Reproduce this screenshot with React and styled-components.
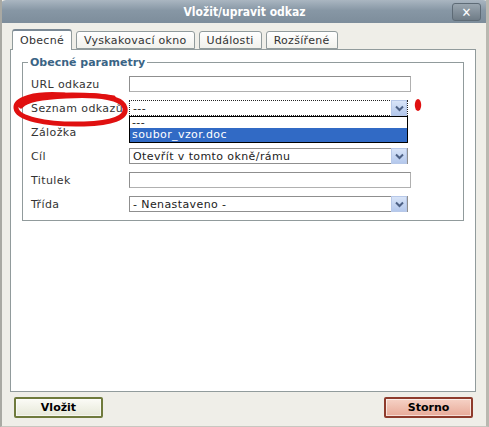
import React from "react";
import styled, { createGlobalStyle } from "styled-components";

const Global = createGlobalStyle`
  html, body { margin: 0; padding: 0; background: #fff; }
  body { font-family: "DejaVu Sans", Verdana, sans-serif; font-size: 11px; }
`;

const Win = styled.div`
  position: relative;
  width: 489px;
  height: 427px;
  box-sizing: border-box;
  background: #efeee8;
  border-left: 2px solid #a9a9a3;
  border-right: 3px solid #b9b8b0;
  border-bottom: 1px solid #c8c7c0;
  overflow: hidden;
`;

const TitleBar = styled.div`
  height: 23px;
  margin: 0 -3px 0 -2px;
  border-radius: 6px 6px 0 0;
  background: linear-gradient(#aab6c1, #8797a5 45%, #7d8d9b);
  display: flex;
  align-items: center;
  justify-content: center;
  position: relative;
  color: #fff;
  font-weight: bold;
  font-size: 12px;
  font-family: "DejaVu Sans Condensed", "DejaVu Sans", sans-serif;
`;

const Close = styled.div`
  position: absolute;
  right: 8px;
  top: 3px;
  width: 27px;
  height: 16px;
  border-radius: 3px;
  border: 1px solid #5e6b76;
  background: linear-gradient(#9aa6b0, #6f7c87);
  display: flex;
  align-items: center;
  justify-content: center;
  color: #fff;
  font-size: 13px;
  font-weight: bold;
`;

const Body = styled.div`
  padding: 6px 10px 0 8px;
`;

const Tabs = styled.div`
  display: flex;
  gap: 4px;
  padding-left: 2px;
  height: 20px;
  align-items: flex-end;
`;

const Tab = styled.div`
  height: ${p => (p.$active ? "21px" : "18px")};
  box-sizing: border-box;
  padding: 0 7px;
  display: flex;
  align-items: center;
  border: 1px solid #919b9c;
  border-bottom: ${p => (p.$active ? "none" : "1px solid #919b9c")};
  border-top: ${p => (p.$active ? "2px solid #7a8894" : "1px solid #919b9c")};
  border-radius: 3px 3px 0 0;
  background: ${p => (p.$active ? "#fff" : "linear-gradient(#fff, #f1f1ec)")};
  margin-bottom: ${p => (p.$active ? "-1px" : "0")};
  color: #333;
  position: relative;
  z-index: ${p => (p.$active ? 2 : 1)};
  letter-spacing: 0.3px;
`;

const Panel = styled.div`
  background: #fff;
  border: 1px solid #919b9c;
  height: 343px;
  box-sizing: border-box;
  padding: 6px 11px 0 11px;
`;

const Fieldset = styled.fieldset`
  margin: 0;
  border: 1px solid #919b9c;
  padding: 7px 8px 8px 8px;
  display: grid;
  grid-template-columns: 98px 1fr;
  row-gap: 8px;
  align-items: center;
`;

const Legend = styled.legend`
  color: #3a6485;
  font-weight: bold;
  padding: 0 2px;
  margin-left: -3px;
`;

const Label = styled.div`
  color: #333;
  letter-spacing: 0.4px;
  white-space: nowrap;
`;

const Input = styled.div`
  height: 16px;
  width: 282px;
  box-sizing: border-box;
  border: 1px solid;
  border-color: #8f8f8f #b0b0b0 #b0b0b0 #8f8f8f;
  background: #fff;
`;

const Select = styled.div`
  height: 16px;
  width: 279px;
  box-sizing: border-box;
  border: 1px ${p => (p.$focus ? "dotted #222" : "solid #8f8f8f")};
  background: #fff;
  display: flex;
  align-items: center;
  padding-left: 3px;
  position: relative;
  color: #222;
  letter-spacing: 0.4px;
  white-space: nowrap;
`;

const Arrow = styled.div`
  position: absolute;
  right: 0;
  top: -1px;
  width: 16px;
  height: 16px;
  box-sizing: border-box;
  border: 1px solid #b7c8e8;
  background: linear-gradient(#d8e4f8, #b4c8ec);
  display: flex;
  align-items: center;
  justify-content: center;
`;

const Cell = styled.div`
  position: relative;
  height: 16px;
`;

const DropList = styled.div`
  position: absolute;
  left: 0;
  top: 16px;
  width: 279px;
  box-sizing: border-box;
  border: 1px solid #000;
  background: #fff;
  z-index: 5;
`;

const Option = styled.div`
  height: ${p => (p.$sel ? "14px" : "11px")};
  line-height: ${p => (p.$sel ? "14px" : "11px")};
  padding-left: 2px;
  letter-spacing: 0.4px;
  color: ${p => (p.$sel ? "#fff" : "#222")};
  background: ${p => (p.$sel ? "#316ac5" : "#fff")};
`;

const Footer = styled.div`
  display: flex;
  justify-content: space-between;
  padding: 5px 3px 0 4px;
`;

const Btn = styled.div`
  width: 89px;
  height: 21px;
  box-sizing: border-box;
  border: 2px solid ${p => p.$edge};
  border-radius: 2px;
  background: ${p => p.$fill};
  display: flex;
  align-items: center;
  justify-content: center;
  font-weight: bold;
  font-size: 11px;
  color: #000;
  box-shadow: inset 0 0 0 1px rgba(255,255,255,0.6);
`;

const Scribble = styled.svg`
  position: absolute;
  left: 0;
  top: 0;
  pointer-events: none;
  z-index: 10;
`;

const Chevron = () => (
  <svg width="9" height="7" viewBox="0 0 9 7">
    <path d="M1 1.5 L4.5 5 L8 1.5" stroke="#4d6185" strokeWidth="2" fill="none" />
  </svg>
);

export default function App() {
  return (
    <>
      <Global />
      <Win>
        <TitleBar>
          Vložit/upravit odkaz
          <Close>✕</Close>
        </TitleBar>
        <Body>
          <Tabs>
            <Tab $active>Obecné</Tab>
            <Tab>Vyskakovací okno</Tab>
            <Tab>Události</Tab>
            <Tab>Rozšířené</Tab>
          </Tabs>
          <Panel>
            <Fieldset>
              <Legend>Obecné parametry</Legend>
              <Label>URL odkazu</Label>
              <Input />
              <Label>Seznam odkazů</Label>
              <Cell>
                <Select $focus>
                  ---
                  <Arrow><Chevron /></Arrow>
                </Select>
                <DropList>
                  <Option>---</Option>
                  <Option $sel>soubor_vzor.doc</Option>
                </DropList>
              </Cell>
              <Label>Záložka</Label>
              <Cell />
              <Label>Cíl</Label>
              <Select>
                Otevřít v tomto okně/rámu
                <Arrow><Chevron /></Arrow>
              </Select>
              <Label>Titulek</Label>
              <Input />
              <Label>Třída</Label>
              <Select>
                - Nenastaveno -
                <Arrow><Chevron /></Arrow>
              </Select>
            </Fieldset>
          </Panel>
          <Footer>
            <Btn $edge="#6f7a3c" $fill="linear-gradient(#fbfbf6, #e6e8d8)">Vložit</Btn>
            <Btn $edge="#8e3b2c" $fill="linear-gradient(#f6d2c6, #e8aa98)">Storno</Btn>
          </Footer>
        </Body>
        <Scribble width="489" height="427">
          <path
            d="M62 95 C32 93 13 99 14 108 C15 118 42 125 82 124 C110 123 125 118 123 108 C121 98 98 94 64 96 C42 97 24 100 19 106"
            stroke="#e01010"
            strokeWidth="5"
            fill="none"
            strokeLinecap="round"
          />
          <path
            d="M30 97 C50 93 90 93 112 97"
            stroke="#e01010"
            strokeWidth="3"
            fill="none"
            strokeLinecap="round"
          />
          <ellipse cx="416" cy="105" rx="3.2" ry="6" fill="#e01010" />
        </Scribble>
      </Win>
    </>
  );
}
